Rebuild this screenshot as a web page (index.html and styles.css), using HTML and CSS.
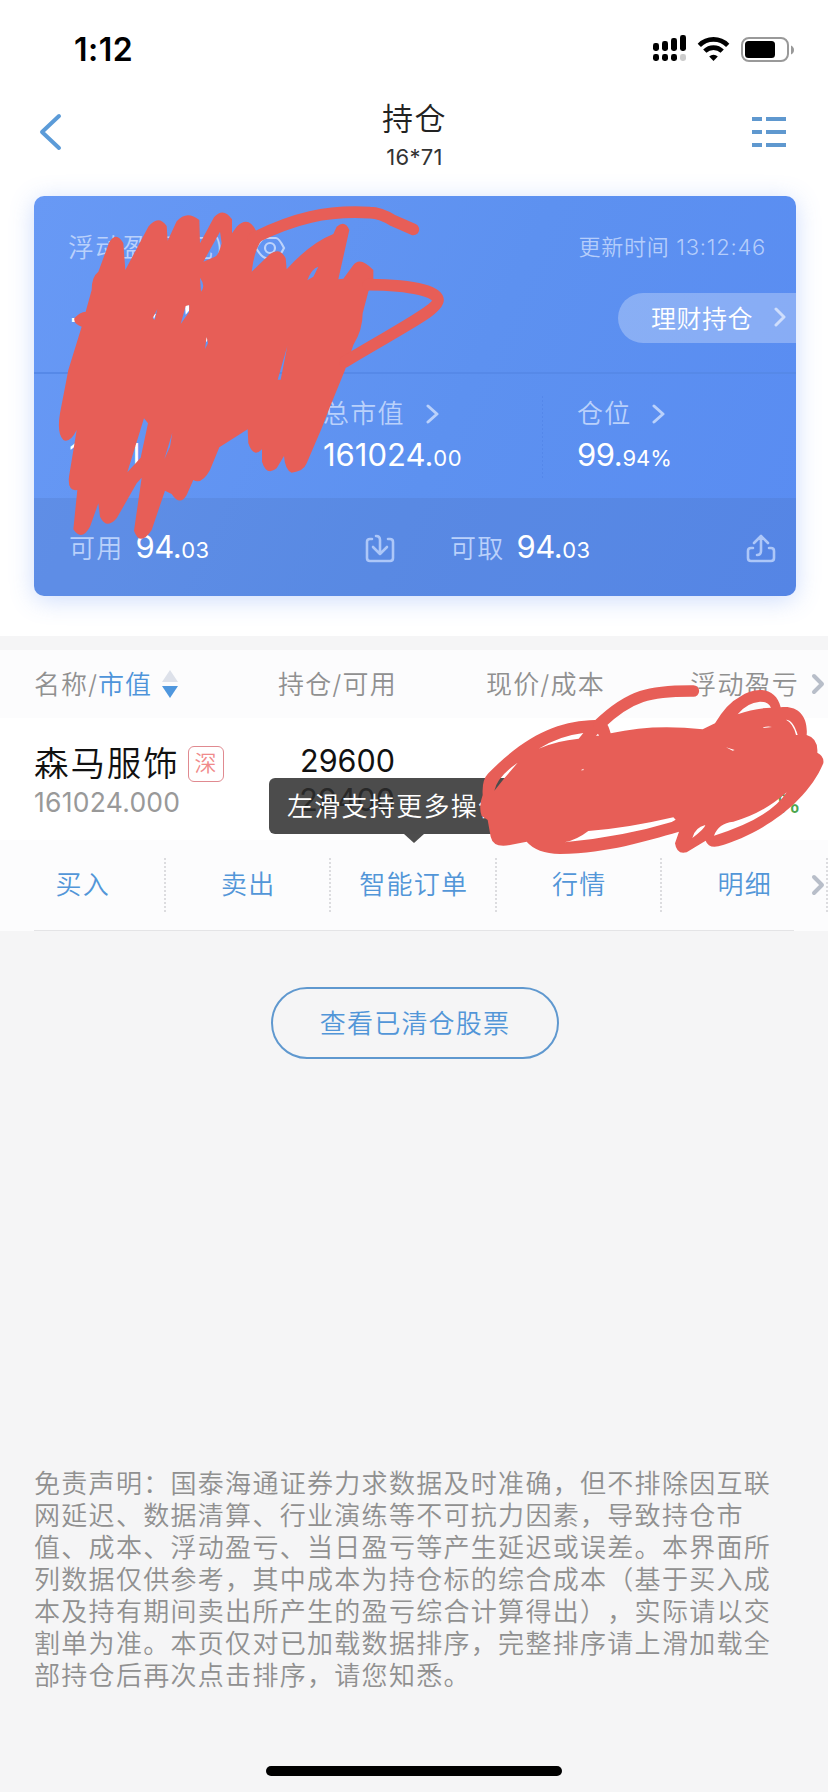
FILE: index.html
```html
<!DOCTYPE html>
<html lang="zh-CN">
<head>
<meta charset="utf-8">
<title>持仓</title>
<link rel="stylesheet" href="styles.css">
</head>
<body>
<div class="screen">
  <header class="status">
    <span class="clock">1:12</span>
    <svg class="status-icons" width="140" height="30" viewBox="0 0 140 30">
      <g>
        <rect x="3" y="10" width="6" height="8" rx="2.4"/><rect x="12" y="8" width="6" height="10" rx="2.4"/><rect x="21" y="5" width="6" height="13" rx="2.4"/><rect x="30" y="2" width="6" height="16" rx="2.4"/>
        <rect x="3" y="21" width="6" height="7" rx="2.4"/><rect x="12" y="21" width="6" height="7" rx="2.4"/><rect x="21" y="21" width="6" height="7" rx="2.4"/><rect x="30" y="21" width="6" height="7" rx="2.4" fill="#ccc"/>
      </g>
      <g fill="none" stroke="#000" stroke-width="4.600">
        <path d="M49.300 12.300a20 20 0 0 1 28.400 0"/>
        <path d="M54.800 18.200a12.300 12.300 0 0 1 17.400 0"/>
      </g>
      <path d="M63.500 28l-4.300-4.500a6.200 6.200 0 0 1 8.600 0z"/>
      <rect x="92" y="5" width="46" height="23" rx="7" fill="none" stroke="#999" stroke-width="2"/>
      <rect x="95" y="8" width="30" height="17" rx="3.500"/>
    </svg>
    <svg class="battery-tip" width="4" height="10" viewBox="0 0 4 10"><path d="M0 .5q3 1.500 3 4.500t-3 4.500z" fill="#999"/></svg>
  </header>

  <nav class="nav">
    <svg width="24" height="40" viewBox="0 0 24 40"><path d="M21 4L4 20l17 16" fill="none" stroke="#5b9bd8" stroke-width="4" stroke-linecap="round" stroke-linejoin="round"/></svg>
    <div class="titles"><h1 class="title">持仓</h1><div class="account">16*71</div></div>
    <svg width="34" height="30" viewBox="0 0 34 30"><path d="M0 2h10M14 2h20M0 15h10M14 15h20M0 28h10M14 28h20" stroke="#5f98cf" stroke-width="4"/></svg>
  </nav>

  <div class="overview">
  <section class="card">
    <div class="summary">
      <div class="line">
        <span class="label">浮动盈亏(元)</span>
        <svg class="eye" width="32" height="24" viewBox="0 0 32 24" fill="none" stroke="#bdd3fb" stroke-width="2.200"><path d="M2 12Q8 2 12 2h10q3 0 8 10-5 10-8 10H12Q8 22 2 12z"/><circle cx="16" cy="12" r="5"/></svg>
        <span class="updated">更新时间 13:12:46</span>
      </div>
      <div class="line second">
        <span class="profit">-</span>
        <a class="wealth">理财持仓<svg width="12" height="20" viewBox="0 0 12 20"><path d="M2 2l8 8-8 8"/></svg></a>
      </div>
    </div>
    <div class="totals">
      <div class="total"><div class="label">总资产</div><div class="num assets">161118.<small>03</small></div></div>
      <div class="total"><div class="label">总市值<svg width="14" height="20" viewBox="0 0 14 20"><path d="M2 2l9 8-9 8"/></svg></div><div class="num">161024.<small>00</small></div></div>
      <div class="total ruled"><div class="label">仓位<svg width="14" height="20" viewBox="0 0 14 20"><path d="M2 2l9 8-9 8"/></svg></div><div class="num ratio">99.<small>94%</small></div></div>
    </div>
    <div class="cash">
      <div class="fund"><span class="label">可用</span><span class="num">94.<small>03</small></span>
        <svg class="tray" width="30" height="30" viewBox="0 0 30 30"><path d="M7 5H5q-3 0-3 3v16q0 3 3 3h20q3 0 3-3V8q0-3-3-3h-2M11 2q4 0 4 4v14M8 13l7 7 7-7"/></svg></div>
      <div class="fund"><span class="label">可取</span><span class="num">94.<small>03</small></span>
        <svg class="tray" width="30" height="30" viewBox="0 0 30 30"><path d="M7 14H5q-3 0-3 3v7q0 3 3 3h20q3 0 3-3v-7q0-3-3-3h-2M11 21q4 0 4-4V2M8 9l7-7 7 7"/></svg></div>
    </div>
  </section>
  </div>

  <section class="holdings">
    <div class="row head">
      <div class="c1">名称/<span class="blue">市值</span><svg width="18" height="30" viewBox="0 0 18 30"><path d="M9 1l8 12H1z" fill="#dde1ea"/><path d="M1 17h16L9 29z" fill="#4f97de"/></svg></div>
      <div class="c2">持仓/可用</div><div class="c3">现价/成本</div><div class="c4">浮动盈亏</div>
      <svg class="more" width="14" height="22" viewBox="0 0 14 22"><path d="M3 3l8 8-8 8"/></svg>
    </div>
    <div class="row stock">
      <div class="c1"><div class="name">森马服饰<span class="badge">深</span></div><div class="value">161024.000</div></div>
      <div class="c2"><div class="qty">29600</div><div class="avail">29400</div></div>
      <div class="c3"></div><div class="c4 percent">%</div>
      <div class="tip">左滑支持更多操作</div>
    </div>
    <div class="actions">
      <a>买入</a><a>卖出</a><a>智能订单</a><a>行情</a><a>明细</a>
      <svg class="more" width="14" height="22" viewBox="0 0 14 22"><path d="M3 3l8 8-8 8"/></svg>
    </div>
  </section>

  <main class="rest">
    <button class="cleared">查看已清仓股票</button>
    <p class="disclaimer">免责声明：国泰海通证券力求数据及时准确，但不排除因互联<br>网延迟、数据清算、行业演练等不可抗力因素，导致持仓市<br>值、成本、浮动盈亏、当日盈亏等产生延迟或误差。本界面所<br>列数据仅供参考，其中成本为持仓标的综合成本（基于买入成<br>本及持有期间卖出所产生的盈亏综合计算得出），实际请以交<br>割单为准。本页仅对已加载数据排序，完整排序请上滑加载全<br>部持仓后再次点击排序，请您知悉。</p>
    <div class="home"></div>
  </main>

  <svg class="marker" width="828" height="1792" viewBox="0 0 828 1792">
    <g transform="translate(20 180) scale(.33333)">
      <path d="M495 372l12 4 2 14-12 14zM398 405l10-4-6 16zM555 482l8-16v14l-6 8z" fill="#fff"/>
      <path class="ink-fill" d="M268 186Q290 152 310 190L316 270L385 140Q415 102 440 138L443 182L470 124Q500 90 538 120L540 190L582 112Q610 80 636 118V160L650 140Q685 105 708 152L740 165Q705 190 695 275L750 222Q780 200 797 235L800 268Q870 190 940 162L950 140Q975 118 988 150L955 298L970 296L1000 255Q1020 228 1060 270L1060 300L1045 335L1028 400Q1028 450 1000 495L975 570L930 680L905 745L860 850Q850 875 815 878Q795 870 792 828L770 865Q740 890 726 845V808Q700 835 685 790L683 748L598 802L570 870Q545 915 520 900L500 945Q480 980 455 942L435 932L395 1050Q360 1102 342 1052L365 893L350 910L290 1015Q260 1050 240 1010L235 970L210 1040Q185 1085 160 1048L172 930Q142 935 147 890L170 750Q150 790 130 780Q110 760 120 700L145 570L185 440Q160 430 163 415Q180 395 197 395L215 330Q215 290 235 275Z
      M550 245L600 155L605 190Q595 228 585 230ZM540 293Q558 318 543 335ZM398 414L412 388 404 420ZM482 432L497 378 508 375 507 397ZM555 507L560 470 564 490ZM773 599L802 498 782 599ZM862 301Q875 265 895 260L880 290ZM322 877L372 715 384 730 362 833ZM433 838L457 758 450 800Z"/>
      <path class="ink-line" d="M700 175C820 115 920 90 1050 98Q1080 98 1120 122L1180 148M1045 314C1180 315 1252 335 1254 360C1254 390 1150 440 975 545"/>
    </g>
    <g transform="translate(410 630) scale(.33333)">
      <path class="ink-fill" d="M555 270C450 272 350 312 235 430Q215 450 218 495Q205 530 215 558L233 570L242 620Q250 655 300 645L350 635Q380 670 450 672C600 668 700 635 807 605L795 640Q800 675 830 667L887 632Q895 655 925 649C1050 615 1190 520 1240 400Q1243 378 1222 368Q1225 325 1190 315C1195 255 1160 225 1112 232C1100 175 1040 165 990 200Q950 220 915 280L878 298C780 287 690 290 602 310Q595 285 590 282Z
      M386 356Q450 317 520 309L506 326Q440 332 386 356ZM253 482Q262 440 323 398L283 445ZM463 637Q500 630 535 603Q650 595 790 562L797 569L785 576Q640 620 463 637ZM847 624Q855 592 886 585Q885 595 847 624ZM912 617Q925 580 970 575Q1060 550 1130 487Q1080 565 912 617ZM983 253Q1010 218 1050 215Q1075 215 1083 233Q1030 235 983 253ZM1128 269Q1150 270 1163 315L1158 315Q1150 280 1128 269ZM948 352L974 360 968 362ZM1060 292Q1074 287 1086 291L1060 294ZM558 317L564 311 567 317ZM512 421L521 416 520 421Z"/>
      <path class="ink-line" d="M568 283C660 195 720 182 850 183"/>
    </g>
  </svg>
</div>
</body>
</html>
```

FILE: styles.css
```css
* { box-sizing: border-box; }
body {
  margin: 0;
  background: #f5f5f6;
  font-family: Inter, "Noto Sans CJK SC", sans-serif;
  font-weight: 350;
  color: #222;
  text-spacing-trim: space-all;
}
.screen {
  position: relative;
  width: 828px;
  height: 1792px;
  overflow: hidden;
  display: flex;
  flex-direction: column;
}
.status {
  height: 88px;
  flex: none;
  background: #fff;
  display: flex;
  align-items: flex-start;
  padding: 33px 33px 0 74px;
}
.clock { flex: 1; font-size: 32px; line-height: 34px; font-weight: 600; letter-spacing: .5px; color: #000; }
.status-icons { flex: none; }
.battery-tip { flex: none; margin: 12px 0 0 1px; }
.nav {
  height: 98px;
  flex: none;
  background: #fff;
  display: flex;
  justify-content: space-between;
  padding: 24px 42px 0 38px;
}
.nav > svg:last-child { margin-top: 5px; }
.titles { text-align: center; margin: -14px 0 0 15px; }
.title { margin: 0; font-size: 31px; line-height: 42px; font-weight: 350; letter-spacing: 1.500px; }
.account { font-size: 22px; line-height: 30px; margin-top: 2px; font-weight: 400; color: #333; letter-spacing: .3px; }
.overview { flex: none; height: 450px; padding: 10px 0 0 34px; background: #fff; }
.card {
  width: 762px;
  height: 400px;
  border-radius: 10px;
  overflow: hidden;
  background: linear-gradient(115deg, #6899f5, #5d91f0 55%, #598cf2);
  box-shadow: 0 4px 24px rgba(90, 140, 245, .3);
  color: #fff;
  display: flex;
  flex-direction: column;
}
.summary { height: 178px; border-bottom: 2px solid #5689e8; flex: none; }
.line { display: flex; align-items: center; padding: 33px 30px 0 34px; height: 70px; }
.label { font-size: 26px; letter-spacing: 1.200px; color: #bad1fb; line-height: 36px; }
.eye { margin-left: 29px; }
.updated { margin-left: auto; font-size: 22px; color: #b5cdfb; letter-spacing: .75px; line-height: 30px; margin-top: -2px; }
.second { padding: 26px 0 0 35px; height: 77px; justify-content: space-between; }
.profit { font-size: 42px; font-weight: 500; line-height: 50px; }
.wealth {
  width: 178px;
  height: 50px;
  border-radius: 25px 0 0 25px;
  background: rgba(255, 255, 255, .28);
  padding: 0 10px 2px 33px;
  display: flex;
  align-items: center;
  justify-content: space-between;
  font-size: 25px;
  letter-spacing: .5px;
}
.card svg { flex: none; }
.card .wealth svg, .totals svg { fill: none; stroke: #cfdefc; stroke-width: 3; stroke-linecap: round; stroke-linejoin: round; }
.card .totals svg { stroke: #bad1fb; }
.totals { height: 124px; flex: none; display: grid; grid-template-columns: 254px 254px 254px; padding-top: 22px; }
.total { padding-left: 35px; height: 84px; }
.ruled { background: repeating-linear-gradient(#5487ea 0 2px, transparent 2px 4px) left / 1px 100% no-repeat; }
.totals .label { display: flex; align-items: center; }
.totals .label svg { margin-left: 21px; }
.totals .num { padding-top: 1px; }
.num { font-size: 31px; line-height: 44px; color: #fff; font-weight: 400; }
.num small { font-size: 22px; letter-spacing: .5px; }
.assets { letter-spacing: .5px; }
.ratio { letter-spacing: -.4px; }
.ratio small { letter-spacing: 0; }
.cash { flex: 1; display: grid; grid-template-columns: 381px 381px; background: rgba(70, 100, 160, .16); }
.fund { display: flex; align-items: center; padding: 3px 20px 0 35px; }
.fund .num { margin-left: 12px; letter-spacing: -.4px; }
.fund .num small { letter-spacing: .2px; }
.tray { margin-left: auto; fill: none; stroke: #adc7f8; stroke-width: 2.600; stroke-linecap: round; stroke-linejoin: round; }
.holdings { flex: none; border-top: 14px solid #f5f5f6; background: #fff; }
.row { display: grid; grid-template-columns: 211px 150px 208px 194px; padding-left: 34px; position: relative; }
.head { height: 68px; background: #fcfcfd; font-size: 26px; letter-spacing: 1.200px; line-height: 68px; color: #909090; padding-top: 1px; }
.head .c1 { display: flex; align-items: center; height: 67px; letter-spacing: 1px; }
.head .c1 svg { margin: 0 0 2px 9px; }
.head .c2, .head .c3, .head .c4 { margin-right: -2px; }
.blue { color: #4e94da; }
.c2, .c3, .c4 { text-align: right; white-space: nowrap; }
.more { position: absolute; right: 3px; top: 23px; fill: none; stroke: #b8bec9; stroke-width: 4; stroke-linecap: round; stroke-linejoin: round; }
.stock { height: 122px; padding-top: 24px; }
.name { display: flex; align-items: center; font-size: 34.500px; letter-spacing: 1.900px; line-height: 46px; height: 44px; font-weight: 350; color: #111; white-space: nowrap; }
.badge { width: 36px; height: 36px; border: 1.500px solid #e08a90; border-radius: 6px; color: #f08a8a; font-size: 22px; line-height: 33px; text-align: center; letter-spacing: 0; margin-left: 8px; }
.value { font-size: 26.500px; line-height: 32px; color: #999; letter-spacing: .25px; font-weight: 400; }
.qty, .avail { font-size: 30.500px; line-height: 38px; color: #111; font-weight: 400; }
.avail { color: #888; padding-top: 1px; }
.percent { padding-top: 47px; color: #4ca64c; font-size: 25px; font-weight: 500; margin-right: -4px; }
.tip {
  position: absolute;
  left: 269px;
  top: 60px;
  width: 290px;
  height: 56px;
  border-radius: 6px;
  background: rgba(0, 0, 0, .7);
  color: #fff;
  font-size: 26px;
  letter-spacing: 1.300px;
  line-height: 58px;
  padding-left: 18px;
  z-index: 2;
}
.tip::after {
  content: "";
  position: absolute;
  left: 135px;
  top: 56px;
  border: 10px solid transparent;
  border-top: 9px solid #4d4d4d;
  border-bottom: 0;
}
.actions { position: relative; display: grid; grid-template-columns: repeat(5, 165.500px); height: 91px; padding-top: 18px; background: linear-gradient(#e4e4e6, #e4e4e6) 34px 100% / 760px 1px no-repeat #fcfcfd; }
.actions a {
  height: 54px;
  text-align: center;
  line-height: 54px;
  font-size: 26px;
  letter-spacing: 1.200px;
  color: #5296d8;
  background: repeating-linear-gradient(#dcdcdf 0 2px, transparent 2px 4px) right / 2px 100% no-repeat;
}
.actions .more { top: 34px; }
.rest { flex: 1; display: flex; flex-direction: column; align-items: center; padding-top: 56px; }
.cleared {
  width: 288px;
  height: 72px;
  flex: none;
  margin-left: 2px;
  padding: 0 0 4px;
  border: 2px solid #5f98cf;
  border-radius: 36px;
  background: none;
  color: #5296d8;
  font: inherit;
  font-size: 26px;
  letter-spacing: 1.200px;
}
.disclaimer { align-self: flex-start; margin: 409px 0 0 34px; font-size: 26px; letter-spacing: 1.300px; line-height: 32px; color: #909090; white-space: nowrap; }
.home { width: 296px; height: 10px; border-radius: 5px; background: #000; margin-top: auto; margin-bottom: 16px; flex: none; }
.marker { position: absolute; left: 0; top: 0; z-index: 5; }
.ink-fill { fill: #e75e57; fill-rule: evenodd; }
.ink-line { fill: none; stroke: #e75e57; stroke-width: 35; stroke-linecap: round; stroke-linejoin: round; }
```
